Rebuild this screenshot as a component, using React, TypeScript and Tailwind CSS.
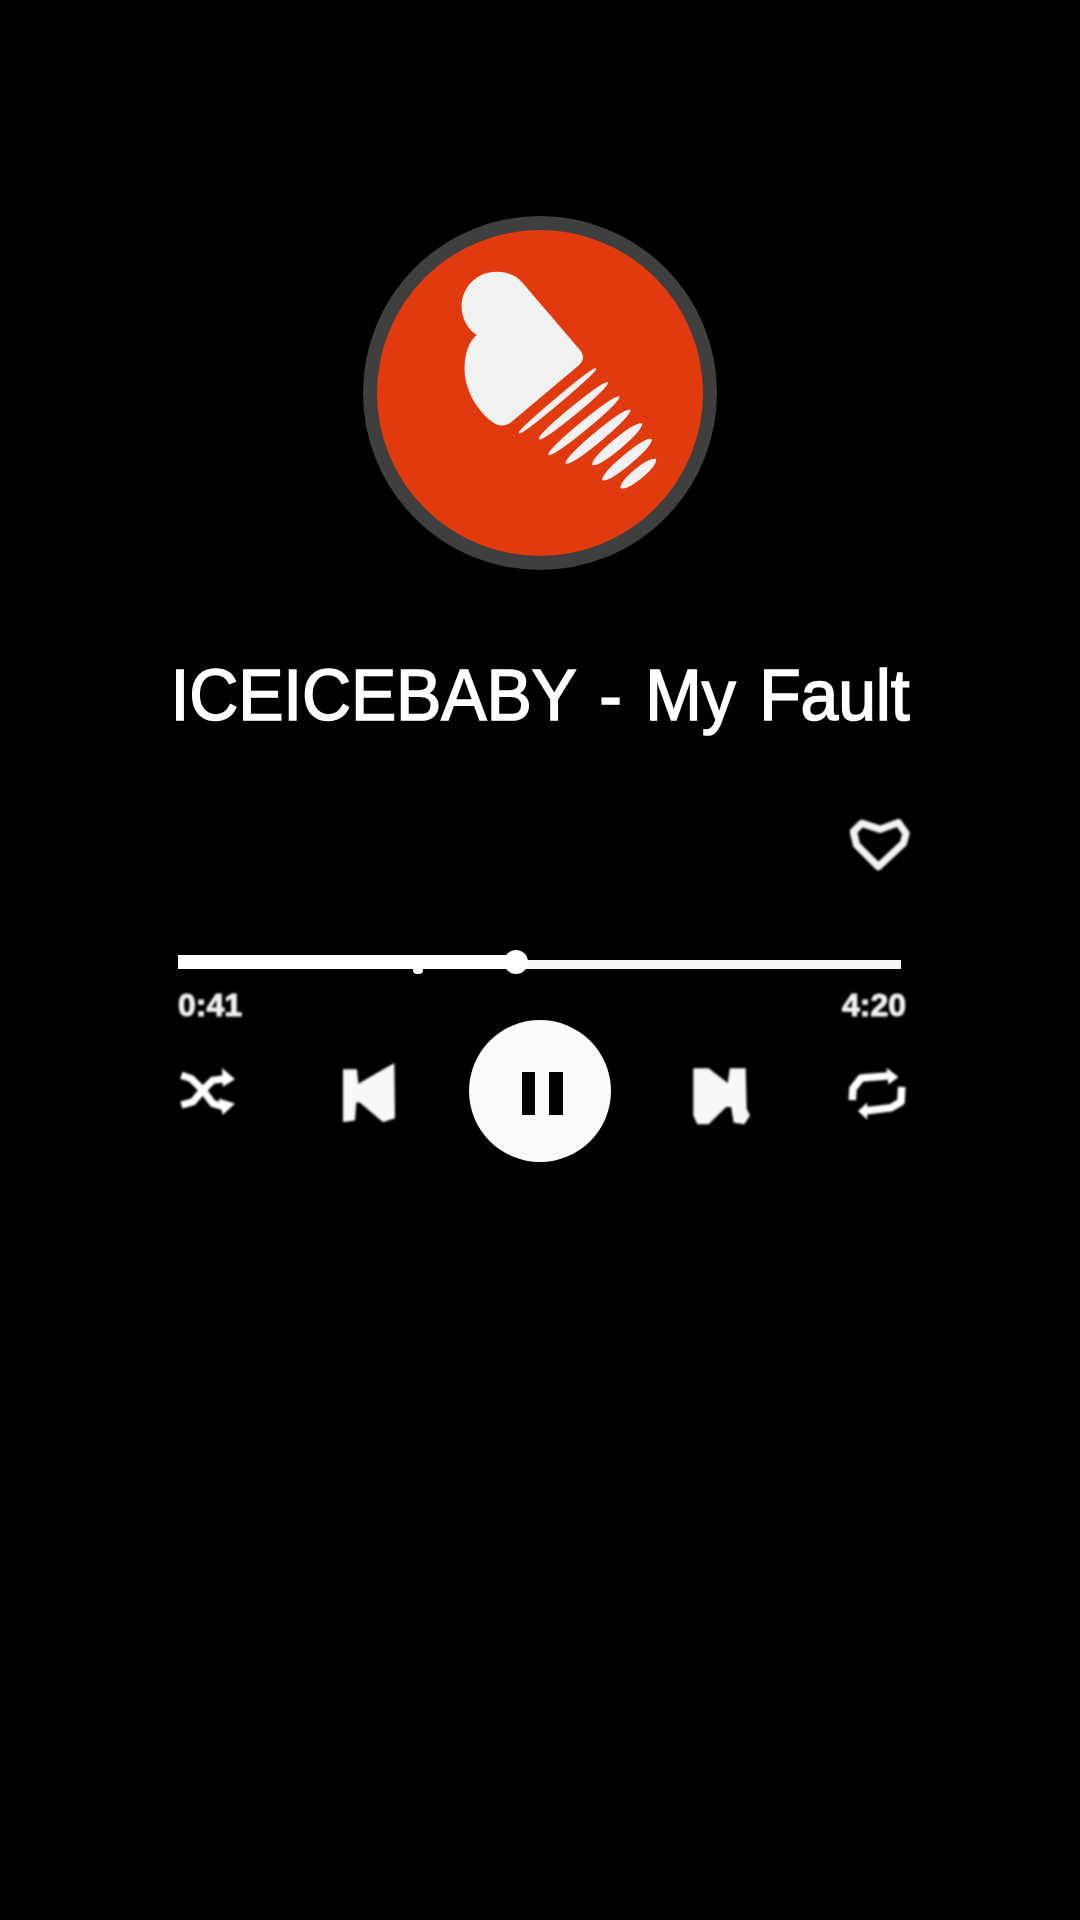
// bars under the logo heart: x1, y1, x2, y2, thickness
const logoBars = [
  [540, 697, 765, 508, 12],
  [600, 715, 800, 550, 18],
  [628, 762, 835, 592, 20],
  [680, 788, 868, 632, 24],
  [760, 792, 903, 673, 26],
  [790, 838, 932, 720, 26],
  [845, 862, 945, 780, 26],
];

function lensPath([x1, y1, x2, y2, w]: number[]) {
  const dx = x2 - x1;
  const dy = y2 - y1;
  const len = Math.hypot(dx, dy);
  const off = (w / 2) / 0.75;
  const nx = (-dy / len) * off;
  const ny = (dx / len) * off;
  const a = [x1 + dx * 0.12, y1 + dy * 0.12];
  const b = [x1 + dx * 0.88, y1 + dy * 0.88];
  return `M${x1} ${y1} C${a[0] + nx} ${a[1] + ny} ${b[0] + nx} ${b[1] + ny} ${x2} ${y2} C${b[0] - nx} ${b[1] - ny} ${a[0] - nx} ${a[1] - ny} ${x1} ${y1} Z`;
}

function Logo() {
  return (
    <svg viewBox="111 90 978 978" className="w-full h-full">
      <path
        fill="#f1f1f1"
        d="M470 215 C500 215 525 225 545 245 L720 450 C735 470 730 485 715 497 L515 665 C500 680 480 680 460 668 C420 640 385 590 375 530 C370 480 380 430 410 405 C380 385 362 350 365 310 C370 260 410 215 470 215 Z"
      />
      {logoBars.map((bar, i) => (
        <path key={i} d={lensPath(bar)} fill="#f1f1f1" stroke="#f1f1f1" strokeWidth="7" strokeLinejoin="round" />
      ))}
    </svg>
  );
}

function HeartIcon() {
  return (
    <svg viewBox="30 25 180 160" className="w-[60px] h-[54px] blur-[1px]" fill="none" stroke="#f4f4f4" strokeWidth="22" strokeLinejoin="round">
      <path d="M120 58 L175 38 L198 70 L190 100 L115 170 L50 105 L40 65 L65 40 Z" />
    </svg>
  );
}

function ShuffleIcon() {
  return (
    <svg viewBox="25 35 175 145" className="w-[58px] h-[48px] blur-[1px]" fill="none" stroke="#fff" strokeWidth="22" strokeLinejoin="round">
      <path d="M35 60 L65 70 L100 105 L130 145 L165 155" />
      <path d="M35 150 L70 140 L100 105 L130 75 L170 70" />
      <path d="M158 38 L197 72 L160 95 Z M148 130 L197 145 L160 180 Z" fill="#fff" stroke="none" />
    </svg>
  );
}

function PrevIcon() {
  return (
    <svg viewBox="520 20 156 176" className="w-[52px] h-[59px] blur-[1px]" fill="#f8f8f8">
      <path d="M520 38 L562 38 L566 82 L650 33 L674 20 L676 185 L640 197 L570 138 L560 138 L556 192 L520 197 Z" />
    </svg>
  );
}

function NextIcon() {
  return (
    <svg viewBox="25 35 172 173" className="w-[57px] h-[58px] blur-[1px]" fill="#f8f8f8">
      <path d="M26 38 L72 38 L130 82 L136 38 L184 38 L187 160 L197 180 L180 207 L148 202 L140 155 L125 155 L72 207 L38 207 L26 180 Z" />
    </svg>
  );
}

function RepeatIcon() {
  return (
    <svg viewBox="490 35 175 160" className="w-[58px] h-[53px] blur-[1px]" fill="none" stroke="#fff" strokeWidth="23" strokeLinejoin="round">
      <path d="M503 135 L505 100 L530 68 L610 62" />
      <path d="M652 95 L650 140 L620 158 L545 167" />
      <path d="M606 37 L642 65 L612 88 Z M548 142 L520 168 L548 194 Z" fill="#fff" stroke="none" />
    </svg>
  );
}

export default function App() {
  return (
    <div className="w-[1080px] h-[1920px] bg-black flex flex-col items-center pt-[216px] font-['Liberation_Sans',sans-serif]">
      <div className="w-[354px] h-[354px] rounded-full border-[14px] border-[#3f3f3f] bg-[#e03a0e]">
        <Logo />
      </div>

      <h1 className="mt-[85px] text-[68px] leading-[80px] font-normal tracking-[-0.2px] [word-spacing:5px] scale-y-[1.06] [-webkit-text-stroke:1.5px_white] text-white whitespace-nowrap">
        ICEICEBABY - My Fault
      </h1>

      <div className="w-[728px] ml-[4px] mt-[83px]">
        <div className="flex justify-end">
          <div className="mr-[-4px]">
            <HeartIcon />
          </div>
        </div>

        {/* seek bar */}
        <div className="relative mt-[78px] h-[24px] pr-[5px] pb-[5px] flex items-end blur-[0.7px]">
          <div className="w-[337px] h-[14px] bg-white" />
          <div className="flex-1 h-[9px] bg-[#f5f5f5]" />
          <div className="absolute left-[326px] top-0 w-[24px] h-[24px] rounded-full bg-white" />
          <div className="absolute left-[235px] top-[18px] w-[10px] h-[6px] rounded-b bg-white" />
        </div>

        <div className="flex justify-between mt-[16px] text-[32px] leading-[30px] font-bold text-[#f2f2f2] [-webkit-text-stroke:1px_#f2f2f2] blur-[1px]">
          <span>0:41</span>
          <span>4:20</span>
        </div>

        <div className="flex items-start">
          <div className="mt-[47px]">
            <ShuffleIcon />
          </div>
          <div className="mt-[43px] ml-[107px]">
            <PrevIcon />
          </div>
          <div className="ml-[74px] w-[142px] h-[142px] rounded-full bg-[#fbfbfb] blur-[0.5px] flex items-center justify-center gap-[14px] pl-[4px] pt-[4px]">
            <div className="w-[13px] h-[43px] bg-black" />
            <div className="w-[14px] h-[43px] bg-black" />
          </div>
          <div className="mt-[47px] ml-[82px]">
            <NextIcon />
          </div>
          <div className="mt-[47px] ml-[98px]">
            <RepeatIcon />
          </div>
        </div>
      </div>
    </div>
  );
}
